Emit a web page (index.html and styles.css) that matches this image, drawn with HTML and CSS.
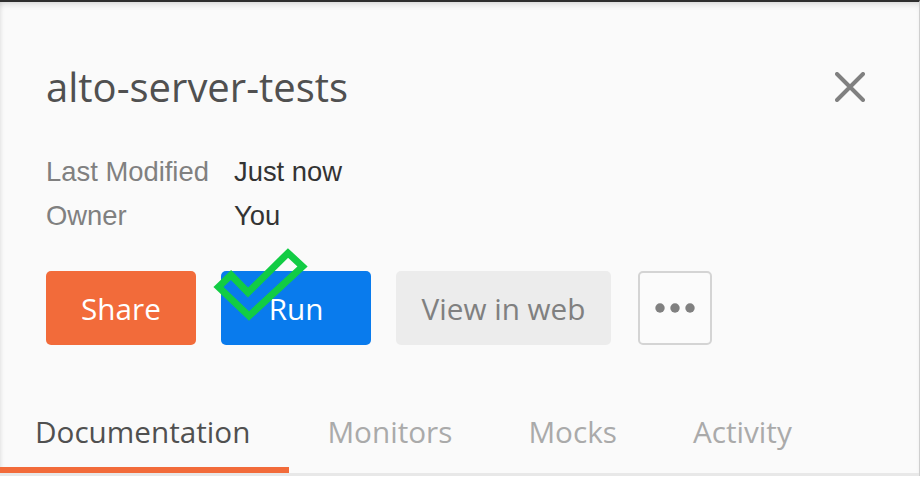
FILE: index.html
```html
<!DOCTYPE html>
<html>
<head>
<meta charset="utf-8">
<link rel="stylesheet" href="styles.css">
</head>
<body>
<div class="panel">
  <div class="header">
    <h1 class="title">alto-server-tests</h1>
    <button class="close" aria-label="Close">
      <svg width="30" height="30" viewBox="0 0 30 30"><path d="M2 2 L28 28 M28 2 L2 28" stroke="#808080" stroke-width="4" stroke-linecap="round" fill="none"/></svg>
    </button>
  </div>
  <div class="meta">
    <div class="meta-row"><span class="meta-label">Last Modified</span><span class="meta-value">Just now</span></div>
    <div class="meta-row"><span class="meta-label">Owner</span><span class="meta-value">You</span></div>
  </div>
  <div class="actions">
    <button class="btn btn-share">Share</button>
    <button class="btn btn-run">Run</button>
    <button class="btn btn-web">View in web</button>
    <button class="btn btn-more" aria-label="More">
      <svg width="44" height="12" viewBox="0 0 44 12"><circle cx="7" cy="6" r="4.7" fill="#808080"/><circle cx="22" cy="6" r="4.7" fill="#808080"/><circle cx="37" cy="6" r="4.7" fill="#808080"/></svg>
    </button>
    <svg class="check" width="110" height="90" viewBox="210 240 110 90"><polygon points="218.5,287 231,275 248,292.5 288,253 302.5,266.5 249,316" fill="none" stroke="#12cc44" stroke-width="7" stroke-linejoin="miter"/></svg>
  </div>
  <div class="tabs">
    <div class="tab active">Documentation</div>
    <div class="tab">Monitors</div>
    <div class="tab">Mocks</div>
    <div class="tab">Activity</div>
  </div>
</div>
</body>
</html>
```

FILE: styles.css
```css
html, body {
  margin: 0;
  padding: 0;
  background: #ffffff;
}
body {
  width: 922px;
  height: 483px;
  overflow: hidden;
}
.panel {
  box-sizing: border-box;
  width: 920px;
  height: 476px;
  background: #fafafa;
  border-top: 2px solid #2e2e2e;
  border-right: 1px solid #cfcfcf;
  box-shadow: inset 0 5px 6px -3px rgba(0,0,0,0.14), inset 3px 0 4px -2px rgba(0,0,0,0.08);
  display: flex;
  flex-direction: column;
}
.header {
  display: flex;
  align-items: center;
  justify-content: space-between;
  padding: 61px 54px 0 46px;
}
.title {
  margin: 0;
  font-family: "Open Sans", sans-serif;
  font-weight: 400;
  font-size: 40px;
  line-height: 48px;
  color: #505050;
}
.close {
  border: 0;
  background: none;
  padding: 0;
  width: 30px;
  height: 30px;
  display: flex;
}
.meta {
  margin-top: 39px;
  padding-left: 46px;
  font-family: "Liberation Sans", Arial, sans-serif;
  font-size: 27.4px;
  line-height: 44px;
}
.meta-row {
  display: flex;
}
.meta-label {
  width: 188px;
  color: #808080;
}
.meta-value {
  color: #333333;
}
.actions {
  position: relative;
  margin-top: 33px;
  padding-left: 46px;
  display: flex;
  align-items: center;
  gap: 25px;
}
.btn {
  box-sizing: border-box;
  height: 74px;
  border: 0;
  border-radius: 5px;
  font-family: "Open Sans", sans-serif;
  font-size: 29.7px;
  padding: 0;
  display: flex;
  align-items: center;
  justify-content: center;
}
.btn-share {
  width: 150px;
  background: #f26b3a;
  color: #ffffff;
}
.btn-run {
  width: 150px;
  background: #097bed;
  color: #ffffff;
}
.btn-web {
  width: 215px;
  background: #ececec;
  color: #808080;
}
.btn-more {
  width: 74px;
  margin-left: 2px;
  background: #fbfbfb;
  border: 2px solid #d4d4d4;
}
.check {
  position: absolute;
  left: 210px;
  top: -31px;
}
.tabs {
  margin-top: 67px;
  display: flex;
  border-bottom: 3px solid #e8e8e8;
}
.tab {
  padding: 0 38px 15px 38px;
  font-family: "Open Sans", sans-serif;
  font-size: 29.7px;
  line-height: 40px;
  color: #aaaaaa;
  border-bottom: 6px solid transparent;
}
.tab:first-child {
  padding-left: 35px;
}
.tab.active {
  color: #505050;
  border-bottom-color: #f26b3a;
  padding-right: 39px;
}
```
